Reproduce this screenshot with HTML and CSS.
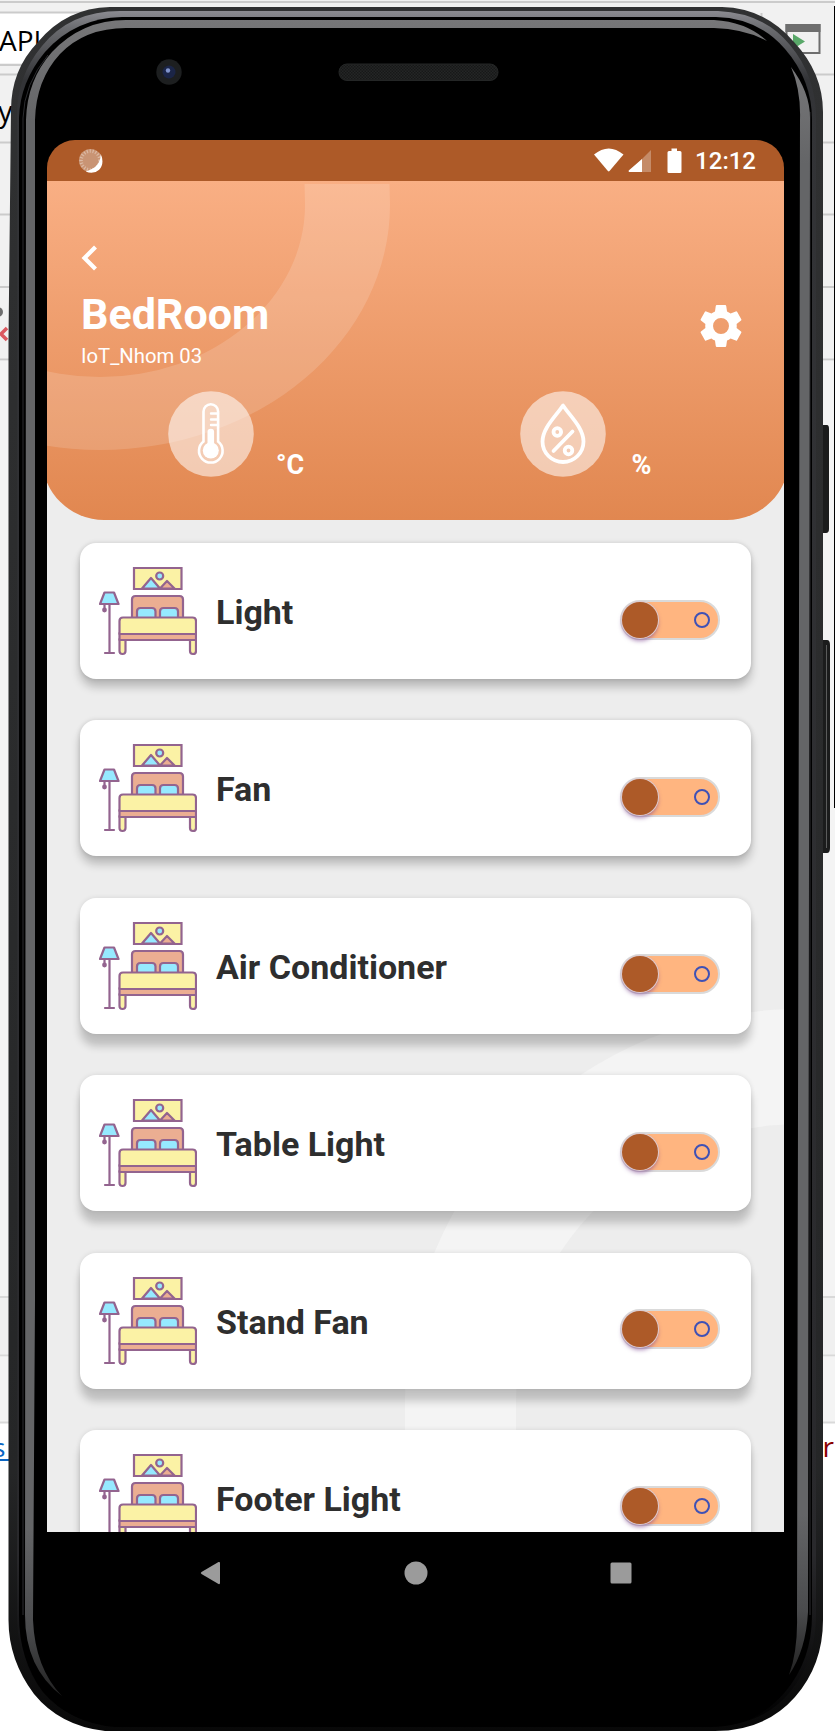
FILE: index.html
```html
<!DOCTYPE html>
<html lang="en">
<head>
<meta charset="utf-8">
<title>BedRoom</title>
<link rel="stylesheet" href="styles.css">
</head>
<body>
<svg class="defs" aria-hidden="true">
  <defs>
    <symbol id="bed" viewBox="0 0 98 90">
      <g stroke="#93648f" stroke-width="2.200" stroke-linejoin="round" stroke-linecap="round">
        <path fill="#fbf2a5" stroke-linejoin="miter" d="M35 2h47.500v21h-47.500z"/>
        <path fill="#96e9ff" d="M43 22.500 52 12l9 10.500z"/>
        <path fill="#ebae92" d="M61 22.500l7-7.500 7.500 7.500z"/>
        <circle cx="60.700" cy="10" r="3.500" fill="#96e9ff"/>
        <path fill="#ebae92" d="M33 52V33.500Q33 30 36.500 30H80.500Q84 30 84 33.500V52z"/>
        <path fill="#96e9ff" d="M38 52V45.500Q38 42 41.500 42H53Q56.500 42 56.500 45.500V52zM61 52V45.500Q61 42 64.500 42H75.500Q79 42 79 45.500V52z"/>
        <path fill="#fbf2a5" d="M20.500 73h6V85q0 3-3 3t-3-3zM91 73h6V85q0 3-3 3t-3-3z"/>
        <path fill="#ebae92" d="M20.500 67H97v7H20.500z"/>
        <path fill="#fbf2a5" d="M20.500 68V55Q20.500 51.500 24 51.500H93.500Q97 51.500 97 55V68z"/>
        <path fill="none" d="M10.500 38V86.500M6 87h9M5.500 38v5"/>
        <circle cx="5.500" cy="44" r="1.300" fill="#93648f"/>
        <path fill="#96e9ff" d="M5.500 26.500h9.500l4.500 11.500h-18.500z"/>
      </g>
    </symbol>
  </defs>
</svg>

<div class="desktop">
  <svg class="shell" viewBox="0 0 835 1731" aria-hidden="true">
    <defs>
      <pattern id="mesh" width="3" height="3" patternUnits="userSpaceOnUse">
        <path fill="#242626" d="M0 0h3v3H0z"/><path fill="#171818" d="M0 0h1.500v1.500H0zM1.500 1.500H3V3H1.500z"/>
      </pattern>
      <linearGradient id="rim" x1="0" y1="0" x2="0" y2="1">
        <stop offset="0" stop-color="#777779"/><stop offset=".06" stop-color="#646567"/><stop offset=".9" stop-color="#646567"/><stop offset=".96" stop-color="#4a4b4d"/><stop offset="1" stop-color="#222"/>
      </linearGradient>
      <linearGradient id="edge" x1="0" y1="0" x2="0" y2="1">
        <stop offset="0" stop-color="#303132"/><stop offset=".85" stop-color="#252627"/><stop offset="1" stop-color="#080808"/>
      </linearGradient>
      <linearGradient id="glow" x1="0" y1="0" x2="0" y2="1">
        <stop offset="0" stop-color="#8b8b91"/><stop offset=".01" stop-color="#6b6c70"/><stop offset=".04" stop-color="#333437"/><stop offset=".9" stop-color="#29292c"/><stop offset="1" stop-color="#000"/>
      </linearGradient>
    </defs>
    <path fill="#f1f1f1" d="M0 0H835V360H0z"/>
    <path fill="#f4f4f4" d="M0 361H835V1297H0z"/>
    <path fill="#f0f0f0" d="M0 1297H835V1355H0z"/>
    <path fill="#f4f4f4" d="M0 1357H835V1422H0z"/>
    <path fill="#fff" d="M0 1423H835V1731H0zM0 13H120V63H0z"/>
    <path fill="none" stroke="#cbcbcb" stroke-width="2" d="M0 2H835M0 12.500H120M0 65H60M0 74.500H835M0 142.500H835M0 214.500H835M0 287H835M0 359.500H835M761.500 13v8"/>
    <path fill="none" stroke="#d9d9d9" stroke-width="2" d="M0 1297H835M0 1355.500H835M0 1422.500H835"/>
    <path fill="#000" d="M834 6h1V808h-1z"/>
    <path fill="#f1f1f1" stroke="#6e6e6e" stroke-width="2" d="M786.500 25h33v28h-33z"/>
    <path fill="#6e6e6e" d="M785.500 24h35v8h-35z"/>
    <path fill="#59a869" d="M793 34l12 7.500-12 7.500z"/>
    <circle cx="-2" cy="312" r="5" fill="#6e6e6e"/>
    <path fill="none" stroke="#db5860" stroke-width="3.500" d="M7 328l-6 6 6 6"/>
  </svg>
  <span class="bg-text bg-api">API</span>
  <span class="bg-text bg-y">y</span>
  <span class="bg-text bg-s">s</span>
  <span class="bg-text bg-r">r</span>
  <svg class="shell" viewBox="0 0 835 1731" aria-hidden="true">
    <path fill="#1b1c1c" d="M820 425h7q2 0 2 4V529q0 4-3 4h-6zM820 640h7q3 0 3 5V848q0 5-3 5h-7z"/>
    <path fill="none" stroke="#5b5c5c" d="M826.500 645V848"/>
    <path fill="url(#edge)" d="M110 7H722Q765 8 794 42 823 73 823 112V1620Q823 1665 795 1697 765 1731 715 1731H105Q60 1726 34 1694 8.500 1660 8.500 1620V340L11 110Q11 70 38 42 66 8 110 7z"/>
    <path fill="url(#glow)" d="M120 11H718Q764 13 790 45 816 76 816 118V1615Q816 1660 790 1692 762 1726 712 1726H115Q70 1723 43 1692 17 1660 17 1615V115Q17 76 42 46 70 11 120 11z"/>
    <path fill="#000" d="M122 17H716Q758 18 785 49 812 80 812 120V1615Q812 1660 785 1692 755 1727 710 1727H115Q70 1723 43 1692 19 1660 19 1615V118Q20 82 45 52 75 18 122 17z"/>
    <path fill="none" stroke="#2c2d30" d="M23 1615V118Q24 84 48 55M810 112V1615"/>
    <path fill="url(#rim)" d="M126 20H714Q747 22 767 41 745 29 714 28H126Q85 28 60 54 36 80 35 120V1300L33 1620Q35 1668 62 1696 25 1668 25 1615L26 120Q27 80 52 52 82 20 126 20z"/>
    <path fill="url(#rim)" d="M791 67Q810 92 810 118L808 1612Q806 1650 789 1675 798 1650 797 1615L800 120Q801 90 791 67z"/>
    <circle cx="169" cy="72" r="12.700" fill="#1d1f20"/>
    <circle cx="169" cy="72" r="6.500" fill="#1b2547"/>
    <circle cx="168" cy="70.500" r="2.200" fill="#8094cc"/>
    <rect x="339" y="64" width="159" height="16.500" rx="8" fill="url(#mesh)" stroke="#242626"/>
  </svg>

  <main class="screen">
    <div class="status">
      <svg class="spinner" viewBox="0 0 26 26"><circle cx="13" cy="13" r="12" fill="#c99474"/><circle cx="13" cy="13" r="9.800" fill="none" stroke="#dbb9a4" stroke-width="3.600" stroke-dasharray="1.200 1.800"/><path d="M23.500 6Q24 20 8 24.500 16 28 22 22.500 28 16 23.500 6z" fill="#fff"/></svg>
      <svg class="signals" viewBox="0 0 88 26" fill="#fff"><path d="M0 6.500Q14.700-5.500 29.500 6.500L15.500 23q-.8.800-1.600 0z"/><path opacity=".3" d="M57 2v22H35z"/><path d="M48 11v13H35q-1-1 0-1.800z"/><path d="M77.500 0.500h5.500v2.500h3q1.500 0 1.500 1.500v19q0 1.500-1.500 1.500h-11q-1.500 0-1.500-1.500v-19q0-1.500 1.500-1.500h2.500z"/></svg>
      <span class="clock">12:12</span>
    </div>

    <header class="hero">
      <svg class="hero-ring" viewBox="0 0 747 338" aria-hidden="true"><path fill="#fff" fill-opacity=".15" d="M262.500 3L263 24A205 172 0 0 1-147 24H-232A290 245 0 0 0 348 24L347.500 3z"/></svg>
      <svg class="back" viewBox="0 0 17 26"><path d="M14.500 2 3.500 13l11 11" fill="none" stroke="#fff" stroke-width="4.200"/></svg>
      <div class="titles">
        <div>
          <h1>BedRoom</h1>
          <p>IoT_Nhom 03</p>
        </div>
        <svg class="gear" viewBox="2 2 20 20"><path fill="#fff" d="M19.430 12.980c.04-.32.070-.64.070-.98s-.03-.66-.07-.98l2.110-1.650c.19-.15.240-.42.120-.64l-2-3.460c-.12-.22-.39-.3-.61-.22l-2.490 1c-.52-.4-1.080-.73-1.690-.98l-.38-2.650C14.460 2.180 14.250 2 14 2h-4c-.25 0-.46.180-.49.420l-.38 2.650c-.61.250-1.170.590-1.690.980l-2.490-1c-.23-.09-.49 0-.61.220l-2 3.460c-.13.220-.07.490.120.640l2.110 1.650c-.04.320-.07.650-.07.980s.03.660.070.980l-2.110 1.650c-.19.150-.24.420-.12.640l2 3.460c.12.220.390.300.610.220l2.490-1c.52.400 1.080.730 1.690.980l.38 2.650c.03.240.240.420.490.420h4c.25 0 .46-.18.490-.42l.38-2.650c.61-.25 1.170-.59 1.690-.98l2.490 1c.23.090.490 0 .61-.22l2-3.460c.12-.22.070-.49-.12-.64l-2.110-1.650zM12 15.800a3.800 3.800 0 1 1 0-7.600 3.800 3.800 0 0 1 0 7.600z"/></svg>
      </div>
      <div class="sensors">
        <div class="sensor">
          <svg viewBox="0 0 86 86"><circle cx="43" cy="43" r="42.800" fill="#fff" fill-opacity=".55"/><path d="M35.500 50.500V20.500a7.300 7.300 0 0 1 14.600 0v30a11.800 11.800 0 1 1-14.600 0z" fill="none" stroke="#fff" stroke-width="2.600"/><path d="M43 22.500h7M43 28.500h7M43 34h7" stroke="#fff" stroke-width="2.400" stroke-linecap="round"/><path d="M42.800 41v15" stroke="#fff" stroke-width="6.600" stroke-linecap="round"/><circle cx="42.800" cy="59.500" r="8" fill="#fff"/></svg>
          <b>°C</b>
        </div>
        <div class="sensor second">
          <svg viewBox="0 0 86 86"><circle cx="43" cy="43" r="42.800" fill="#fff" fill-opacity=".55"/><g fill="none" stroke="#fff" stroke-width="3.800" stroke-linecap="round" stroke-linejoin="round"><path d="M43 14.500C36 25 22.500 37 22.500 50.500a20.500 20.500 0 0 0 41 0C63.500 37 50 25 43 14.500z"/><path d="M52.500 40.500 33.500 60"/><circle cx="37.300" cy="41" r="3.800"/><circle cx="48.500" cy="59.500" r="3.800"/></g></svg>
          <b>%</b>
        </div>
      </div>
    </header>

    <section class="list">
      <svg class="list-ring" viewBox="47 519 737 1013" aria-hidden="true"><path fill="#f4f4f4" d="M800 1008A395 392 0 0 0 405 1400V1532H516V1400A284 277 0 0 1 800 1123z"/></svg>
      <article class="card"><svg class="bed"><use href="#bed"/></svg><h2>Light</h2><span class="switch"><i></i></span></article>
      <article class="card"><svg class="bed"><use href="#bed"/></svg><h2>Fan</h2><span class="switch"><i></i></span></article>
      <article class="card"><svg class="bed"><use href="#bed"/></svg><h2>Air Conditioner</h2><span class="switch"><i></i></span></article>
      <article class="card"><svg class="bed"><use href="#bed"/></svg><h2>Table Light</h2><span class="switch"><i></i></span></article>
      <article class="card"><svg class="bed"><use href="#bed"/></svg><h2>Stand Fan</h2><span class="switch"><i></i></span></article>
      <article class="card"><svg class="bed"><use href="#bed"/></svg><h2>Footer Light</h2><span class="switch"><i></i></span></article>
    </section>

    <nav class="navbar">
      <svg viewBox="0 0 24 24"><path d="M2.500 11 19.500 1q1.500-.5 1.500 1v20q0 1.500-1.500 1L2.500 13q-1.500-1 0-2z"/></svg>
      <svg viewBox="0 0 24 24"><circle cx="12" cy="12" r="11.500"/></svg>
      <svg viewBox="0 0 24 24"><rect x="1.500" y="1.500" width="21" height="21" rx="1.500"/></svg>
    </nav>
  </main>
</div>
</body>
</html>
```
FILE: styles.css
```css
*, *::after { box-sizing: border-box; }

body {
  margin: 0;
  font-family: Roboto, "Liberation Sans", sans-serif;
}

svg { display: block; flex: none; }

.defs { position: absolute; width: 0; height: 0; }

.desktop {
  position: relative;
  width: 835px;
  height: 1731px;
  padding: 140px 51px 0 47px;
  overflow: hidden;
}

.shell { position: absolute; inset: 0; width: 835px; height: 1731px; }

.bg-text {
  position: absolute;
  font-family: "Open Sans", "Noto Sans", sans-serif;
  line-height: 36px;
  color: #000;
}
.bg-api { left: -1px; top: 22px; font-size: 28px; }
.bg-y { left: -2px; top: 93px; font-size: 29px; }
.bg-s { left: -7px; top: 1429px; font-size: 26px; color: #0b66c3; border-bottom: 2px solid #0b66c3; width: 18px; height: 32px; }
.bg-r { left: 822.500px; top: 1428px; font-size: 28px; color: #8b0000; }

.screen {
  position: relative;
  display: flex;
  flex-direction: column;
  width: 737px;
  height: 1474px;
  border-radius: 28px;
  overflow: hidden;
}

.status {
  display: flex;
  align-items: center;
  flex: none;
  height: 41px;
  padding: 0 28px 0 31px;
  background: #ad5a28;
  color: #fff;
}
.spinner { width: 25px; height: 25px; }
.signals { width: 88px; height: 26px; margin-left: auto; }
.clock { margin-left: 13px; padding-top: 1px; font-size: 24px; font-weight: 500; line-height: 40px; }

.hero {
  position: relative;
  z-index: 1;
  flex: none;
  height: 338.500px;
  margin: 0 -5px;
  padding: 64px 44px 0 39px;
  border-radius: 0 0 62px 62px;
  background: linear-gradient(#f9af84, #e18750);
  color: #fff;
}
.hero-ring { position: absolute; left: 0; top: 0; width: 747px; height: 338px; }
.back { position: relative; width: 17px; height: 26px; }
.titles { position: relative; display: flex; justify-content: space-between; padding: 18px 3px 0 0; height: 121px; }
.titles h1 { margin: 0; font-size: 43px; line-height: 50px; font-weight: 700; }
.titles p { margin: 5px 0 0; font-size: 20.300px; line-height: 24px; }
.gear { width: 42px; height: 42px; margin-top: 16px; }
.sensors { position: relative; display: flex; padding-left: 87px; margin-top: -1px; }
.sensor { display: flex; flex: none; align-items: flex-end; width: 351.500px; }
.sensor.second { width: auto; }
.sensor svg { width: 86px; height: 86px; }
.sensor b { margin-left: 22px; font-size: 27px; line-height: 32px; font-weight: 700; margin-bottom: -4px; }
.sensor.second b { margin-left: 26px; }

.list {
  position: relative;
  display: flex;
  flex-direction: column;
  gap: 41.400px;
  height: 1072.500px;
  flex: none;
  margin-top: -60px;
  padding: 83.500px 33px 0;
  background: #ededed;
  overflow: hidden;
}
.list-ring { position: absolute; left: 0; top: 60px; width: 737px; height: 1013px; }

.card {
  position: relative;
  display: flex;
  align-items: center;
  flex: none;
  height: 136px;
  padding: 0 31px 0 19px;
  border-radius: 16px;
  background: #fff;
  box-shadow: 0 8px 10px rgba(0, 0, 0, .22), 0 0 5px rgba(0, 0, 0, .14);
}
.card:nth-of-type(n + 3) { box-shadow: 0 12px 9px rgba(0, 0, 0, .2), 0 0 5px rgba(0, 0, 0, .1); }
.bed { width: 98px; height: 90px; }
.card h2 {
  margin: 0 auto 0 19px;
  padding-top: 2px;
  font-size: 34px;
  line-height: 40px;
  font-weight: 700;
  color: #2e2e2e;
}

.switch {
  position: relative;
  display: flex;
  align-items: center;
  justify-content: space-between;
  width: 100px;
  height: 40px;
  margin-top: 17px;
  padding: 0 8px 0 0;
  border: 2px solid #dadada;
  border-radius: 20px;
  background: #ffb580;
}
.switch i {
  width: 36px;
  height: 36px;
  border-radius: 50%;
  background: #ad5a28;
  box-shadow: 0 0 0 1px #ddcbd0, 0 3px 4px rgba(110, 50, 130, .55);
}
.switch::after {
  content: "";
  width: 16px;
  height: 16px;
  border: 2px solid #3f51b5;
  border-radius: 50%;
}

.navbar {
  display: grid;
  grid-template-columns: repeat(3, 205px);
  justify-content: center;
  justify-items: center;
  flex: none;
  height: 82px;
  padding-top: 29px;
  background: #000;
}
.navbar svg { width: 24px; height: 24px; fill: #9b9b9b; }
```
